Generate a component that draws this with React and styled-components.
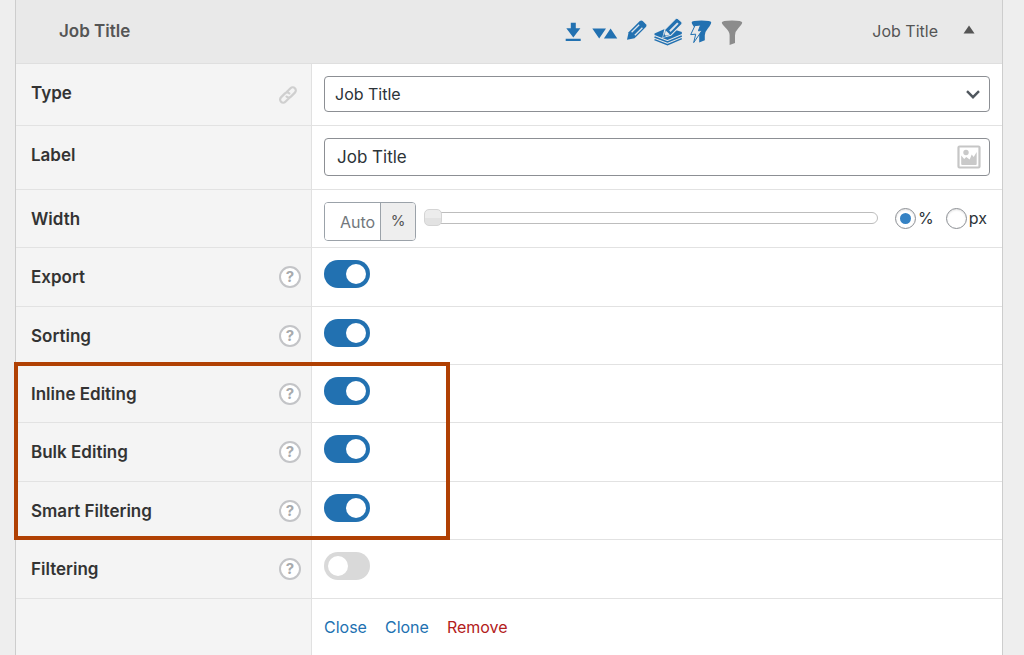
import React, { useState } from "react";
import styled, { createGlobalStyle } from "styled-components";

const blue = "#2271b1";

const GlobalStyle = createGlobalStyle`
  *, *::before, *::after { box-sizing: border-box; }
  body {
    margin: 0;
    background: #eeeeee;
    color: #2c3338;
    font-family: Inter, "Liberation Sans", sans-serif;
    font-size: 16px;
    line-height: 24px;
  }
  input, select, button { font: inherit; color: inherit; margin: 0; }
`;

const Panel = styled.form`
  margin: 0 21px 0 15px;
  min-height: 100vh;
  display: flex;
  flex-direction: column;
  border: solid #cdcdcd;
  border-width: 0 1px;
  background: #fff;
`;

const Header = styled.header`
  display: flex;
  align-items: center;
  min-height: 64px;
  padding: 0 27px 2px 43px;
  border-bottom: 1px solid #dfdfdf;
  background: #e9e9e9;
  color: #555;
`;

const Title = styled.h2`
  flex: 1;
  margin: 0;
  font-size: 17px;
  font-weight: 600;
`;

const Features = styled.div`
  display: flex;
  align-items: center;
  gap: 8px;
  margin-right: 131px;
  padding-top: 2px;

  svg { display: block; height: 28px; overflow: visible; }
`;

const CollapseButton = styled.button`
  display: flex;
  align-items: center;
  gap: 25px;
  padding: 0;
  border: 0;
  background: none;
`;

const Row = styled.div`
  display: flex;
  flex: ${(p) => (p.$fill ? "1" : "none")};
  min-height: ${(p) => p.$height || 58}px;
  border-bottom: ${(p) => (p.$fill ? "0" : "1px solid #e2e2e2")};
`;

const LabelCell = styled.div`
  flex: none;
  display: flex;
  align-items: flex-start;
  justify-content: space-between;
  width: 296px;
  padding: 17px 10px 16px 15px;
  border-right: 1px solid #e1e1e1;
  background: #f4f4f4;

  > svg { flex: none; margin: 4px 3px 0 0; }
`;

const Label = styled.label`
  color: #333;
  font-size: 17px;
  font-weight: 600;
`;

const HelpButton = styled.button`
  width: 22px;
  height: 22px;
  margin-top: 1px;
  padding: 0;
  border: 2px solid #c3c4c7;
  border-radius: 50%;
  background: #fff;
  color: #a7aaad;
  font-size: 15px;
  font-weight: 700;
  line-height: 18px;
  text-align: center;
`;

const FieldCell = styled.div`
  flex: 1;
  min-width: 0;
  display: flex;
  align-items: flex-start;
  padding: 12px 12px 6px;
`;

const ControlBox = styled.div`
  flex: 1;
  display: flex;
  align-items: center;
  height: ${(p) => p.$height}px;
  padding-right: 8px;
  border: 1px solid #8c8f94;
  border-radius: 4px;
  background: #fff;

  select, input {
    flex: 1;
    min-width: 0;
    height: 100%;
    padding: 0 12px;
    border: 0;
    outline: 0;
    background: transparent;
    appearance: none;
  }
  input { font-size: 17px; }
  select { padding: 0 10px; }
`;

const SelectBox = styled(ControlBox)`
  position: relative;
  padding: 0;

  svg { position: absolute; right: 8px; pointer-events: none; }
`;

const Unit = styled.div`
  display: flex;
  flex: none;
  width: 92px;
  height: 39px;
  overflow: hidden;
  border: 1px solid #9ba2a9;
  border-radius: 4px;

  input {
    width: 56px;
    padding: 0 4px 0 15px;
    border: 0;
    border-right: 1px solid #9ba2a9;
    outline: 0;
  }
  input::placeholder { color: #72777c; opacity: 1; }
  span {
    flex: 1;
    background: #eee;
    color: #555;
    font-size: 15px;
    line-height: 36px;
    text-align: center;
  }
`;

const Slider = styled.input`
  flex: 1;
  min-width: 0;
  height: 18px;
  margin: 7px 17px 0 8px !important;
  appearance: none;
  background: none;

  &::-webkit-slider-runnable-track {
    height: 12px;
    border: 1px solid #bdbdbd;
    border-radius: 6px;
    background: #fff;
  }
  &::-webkit-slider-thumb {
    appearance: none;
    width: 18px;
    height: 17px;
    margin: -4px 0 0 -1px;
    border: 1px solid #d4d4d4;
    border-radius: 5px;
    background: linear-gradient(#ececec 50%, #e2e2e2 50%);
  }
`;

const Units = styled.div`
  display: flex;
  gap: 12px;
  padding-right: 3px;
  margin-top: 4px;
`;

const RadioLabel = styled.label`
  display: flex;
  align-items: center;
  gap: 2px;

  input {
    display: grid;
    place-items: center;
    width: 21px;
    height: 21px;
    border: 1px solid #8c8f94;
    border-radius: 50%;
    appearance: none;
    background: #fff;
    box-shadow: inset 0 1px 2px rgba(0, 0, 0, 0.12);
  }
  input:checked::before {
    content: "";
    width: 11px;
    height: 11px;
    border-radius: 50%;
    background: #3582c4;
  }
`;

const Switch = styled.input`
  width: 46px;
  height: 28px;
  padding: 4px;
  border-radius: 14px;
  appearance: none;
  background: #d9d9d9;

  &::before {
    content: "";
    display: block;
    width: 20px;
    height: 20px;
    border-radius: 50%;
    background: #fff;
  }
  &:checked { background: ${blue}; }
  &:checked::before { margin-left: 18px; }
`;

const HighlightGroup = styled.div`
  position: relative;

  &::after {
    content: "";
    position: absolute;
    inset: -3px auto 0 -2px;
    width: 436px;
    border: 4px solid #b04003;
    pointer-events: none;
  }
`;

const Actions = styled.nav`
  display: flex;
  gap: 18px;
  padding-top: 4px;
`;

const Action = styled.a`
  color: ${(p) => (p.$danger ? "#b3201b" : blue)};
  text-decoration: none;
`;

const DownloadIcon = () => (
  <svg width="20" height="28" viewBox="0 0 20 28" fill={blue}>
    <path d="M7.8 4.7h5v5.5h4.6L10.3 19.5 3.3 10.2h4.5zM2.7 20.8h15v2.3h-15z" />
  </svg>
);

const SortIcon = () => (
  <svg width="26" height="28" viewBox="0 0 26 28" fill={blue}>
    <path d="M1.3 10.6H15L8.2 20.4zM12.9 20.4h13.4L19.6 10.6z" />
  </svg>
);

const PencilIcon = () => (
  <svg width="22" height="28" viewBox="0 0 22 28">
    <path d="M2 21.7l1.6-7.4L14.8 3.1q1.4-1.3 2.9-.1l3.2 3.2q1.3 1.4 0 2.9L9.6 20.2z" fill={blue} />
    <path d="M6.6 14.3l7.6-7.6M9.8 17.3l7.6-7.6" stroke="#dbe4ec" strokeWidth="1.3" />
    <path d="M4.9 15l4.2 4-4.5 1.1z" fill={blue} />
  </svg>
);

const BulkEditIcon = () => (
  <svg width="28" height="28" viewBox="0 0 28 28">
    <path d="M-.5 15.5L13 10l13.8 4.8v6L12.8 27-.5 22.5z" fill="#e9e9e9" />
    <path d="M-.5 15.5L13 9.500l13.8 4.500v2L12.500 22-.5 17z" fill={blue} />
    <path d="M-.5 19l13 5L26.800 18M-.5 21.700l13 5L26.800 20.700" fill="none" stroke={blue} strokeWidth="1.400" />
    <path d="M8 19.300l1.900-8L20.600.6q1.200-1 2.400 0l3.700 3.300q1 1.200 0 2.500L15.900 17.300z" fill={blue} stroke="#e9e9e9" strokeWidth="1.200" />
    <path d="M10.700 12.600l4.300 3.900-5.600 1.600z" fill="#e9e9e9" />
    <path d="M14.900 13.300l8-8.200" stroke="#dbe4ec" strokeWidth="2" />
    <path d="M8 19.300l.8-3.400 2.500 2.400z" fill={blue} />
  </svg>
);

const SmartFilterIcon = () => (
  <svg width="22" height="28" viewBox="0 0 22 28">
    <path d="M.7 4.2q0-1.800 9.700-1.800t9.800 1.800q0 2-3.200 6-3.200 3.700-3.200 7v5.100l-5.600 2.200v-7.300q0-3.300-4-7Q.7 6.200.7 4.200z" fill={blue} />
    <path d="M4 7.600L9.600 7 7.400 12.800l3.600-.2L2.700 24.600l2-8.400-5 .4z" fill="#e9e9e9" stroke={blue} strokeWidth="1" strokeLinejoin="round" />
  </svg>
);

const FilterIcon = () => (
  <svg width="20" height="28" viewBox="0 0 20 28" fill="#8c8c8c">
    <path d="M.8 4.600q0-2 10.200-2t10.200 2q0 1.900-3.900 5.600-3.300 3.300-3.300 7.100v7.600l-5.400 2v-9.600q0-3.800-3.600-7.100Q.8 6.500.8 4.600z" />
  </svg>
);

const LinkIcon = () => (
  <svg width="20" height="20" viewBox="0 0 20 20" fill="none" stroke="#cfcfcf" strokeWidth="2.200" strokeLinecap="round">
    <path d="M8.200 7.500l4.300-4.300a3.100 3.100 0 0 1 4.400 4.400l-4 4a3.100 3.100 0 0 1-4.400 0M11.700 12.500l-4.300 4.300A3.100 3.100 0 0 1 3 12.400l4-4a3.100 3.100 0 0 1 4.400 0" />
  </svg>
);

const ChevronIcon = () => (
  <svg width="16" height="16" viewBox="0 0 16 16" fill="none" stroke="#50575e" strokeWidth="2.400">
    <path d="M2 5.200l6 6 6-6" />
  </svg>
);

const ImageIcon = () => (
  <svg width="24" height="24" viewBox="0 0 24 24">
    <rect x="1.500" y="1.500" width="21" height="21" rx="1" fill="#fff" stroke="#c6c6c6" strokeWidth="2.200" />
    <circle cx="9" cy="7.500" r="2.700" fill="#c9c9c9" />
    <path d="M4.200 19v-8.500l3 3.500 2-2 3.500 2.500 2-5 2 2.500 3-5V19q0 1-1 1H5.200q-1 0-1-1z" fill="#c9c9c9" />
  </svg>
);

const ArrowUpIcon = () => (
  <svg width="12" height="12" viewBox="0 0 12 12" fill="#555">
    <path d="M6 .5l5.500 8H.5z" />
  </svg>
);

function SwitchRow({ label, height, initial = true }) {
  const [on, setOn] = useState(initial);
  const id = label.toLowerCase().replace(" ", "-");
  return (
    <Row $height={height}>
      <LabelCell>
        <Label htmlFor={id}>{label}</Label>
        <HelpButton type="button" aria-label={`About ${label}`}>?</HelpButton>
      </LabelCell>
      <FieldCell>
        <Switch id={id} type="checkbox" role="switch" checked={on} onChange={() => setOn(!on)} />
      </FieldCell>
    </Row>
  );
}

export default function App() {
  const [unit, setUnit] = useState("%");
  const [width, setWidth] = useState("0");
  return (
    <>
      <GlobalStyle />
      <Panel>
        <Header>
          <Title>Job Title</Title>
          <Features aria-hidden="true">
            <DownloadIcon />
            <SortIcon />
            <PencilIcon />
            <BulkEditIcon />
            <SmartFilterIcon />
            <FilterIcon />
          </Features>
          <CollapseButton type="button" aria-expanded="true">
            Job Title
            <ArrowUpIcon />
          </CollapseButton>
        </Header>
        <Row $height={62}>
          <LabelCell>
            <Label htmlFor="type">Type</Label>
            <LinkIcon />
          </LabelCell>
          <FieldCell>
            <SelectBox $height={36}>
              <select id="type">
                <option>Job Title</option>
              </select>
              <ChevronIcon />
            </SelectBox>
          </FieldCell>
        </Row>
        <Row $height={64}>
          <LabelCell>
            <Label htmlFor="label">Label</Label>
          </LabelCell>
          <FieldCell>
            <ControlBox $height={38}>
              <input id="label" type="text" defaultValue="Job Title" />
              <ImageIcon />
            </ControlBox>
          </FieldCell>
        </Row>
        <Row>
          <LabelCell>
            <Label htmlFor="width">Width</Label>
          </LabelCell>
          <FieldCell>
            <Unit>
              <input id="width" type="text" placeholder="Auto" />
              <span>{unit}</span>
            </Unit>
            <Slider
              type="range"
              aria-label="Column width"
              value={width}
              onChange={(e) => setWidth(e.target.value)}
            />
            <Units>
              {["%", "px"].map((u) => (
                <RadioLabel key={u}>
                  <input type="radio" name="unit" checked={unit === u} onChange={() => setUnit(u)} />
                  {u}
                </RadioLabel>
              ))}
            </Units>
          </FieldCell>
        </Row>
        <SwitchRow label="Export" height={59} />
        <SwitchRow label="Sorting" />
        <HighlightGroup>
          <SwitchRow label="Inline Editing" />
          <SwitchRow label="Bulk Editing" height={59} />
          <SwitchRow label="Smart Filtering" />
        </HighlightGroup>
        <SwitchRow label="Filtering" height={59} initial={false} />
        <Row $fill>
          <LabelCell />
          <FieldCell>
            <Actions>
              <Action href="#close">Close</Action>
              <Action href="#clone">Clone</Action>
              <Action href="#remove" $danger>Remove</Action>
            </Actions>
          </FieldCell>
        </Row>
      </Panel>
    </>
  );
}
